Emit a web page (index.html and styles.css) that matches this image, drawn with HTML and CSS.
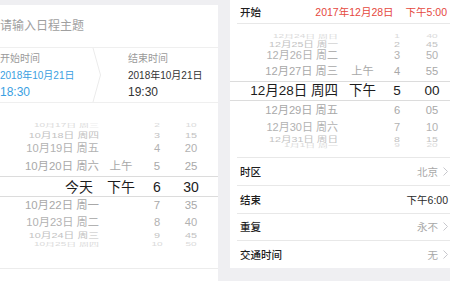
FILE: index.html
```html
<!DOCTYPE html>
<html lang="zh-CN">
<head>
    <meta charset="UTF-8">
    <meta name="viewport" content="width=device-width, initial-scale=1.0">
    <title>日程</title>
    <link rel="stylesheet" href="styles.css">
</head>
<body>
    <div class="screen">
        <section class="panel left">
            <div class="subject">请输入日程主题</div>

            <div class="times">
                <div class="time-col start">
                    <div class="time-label">开始时间</div>
                    <div class="time-date">2018年10月21日</div>
                    <div class="time-hm">18:30</div>
                </div>
                <svg class="time-arrow" width="10" height="54" viewBox="0 0 10 54">
                    <path d="M1 0 L8.5 27 L1 54" fill="none" stroke="#ebebeb" stroke-width="1"/>
                </svg>
                <div class="time-col end">
                    <div class="time-label">结束时间</div>
                    <div class="time-date">2018年10月21日</div>
                    <div class="time-hm">19:30</div>
                </div>
            </div>

            <div class="picker picker-left">
                <div class="row far4"><span class="c-date">10月17日 周三</span><span></span><span>2</span><span>10</span></div>
                <div class="row far3"><span class="c-date">10月18日 周四</span><span></span><span>3</span><span>15</span></div>
                <div class="row far2"><span class="c-date">10月19日 周五</span><span></span><span>4</span><span>20</span></div>
                <div class="row far1"><span class="c-date">10月20日 周六</span><span>上午</span><span>5</span><span>25</span></div>
                <div class="row sel"><span class="c-date today">今天</span><span>下午</span><span>6</span><span>30</span></div>
                <div class="row near1"><span class="c-date">10月22日 周一</span><span></span><span>7</span><span>35</span></div>
                <div class="row near2"><span class="c-date">10月23日 周二</span><span></span><span>8</span><span>40</span></div>
                <div class="row near3"><span class="c-date">10月24日 周三</span><span></span><span>9</span><span>45</span></div>
                <div class="row near4"><span class="c-date">10月25日 周四</span><span></span><span>10</span><span>50</span></div>
            </div>
        </section>

        <section class="panel right">
            <div class="start-row">
                <span class="label">开始</span>
                <span class="start-value">
                    <span>2017年12月28日</span>
                    <span>下午5:00</span>
                </span>
            </div>

            <div class="picker picker-right">
                <div class="row far4"><span class="c-date">12月24日 周日</span><span></span><span>1</span><span>40</span></div>
                <div class="row far3"><span class="c-date">12月25日 周一</span><span></span><span>2</span><span>45</span></div>
                <div class="row far2"><span class="c-date">12月26日 周二</span><span></span><span>3</span><span>50</span></div>
                <div class="row far1"><span class="c-date">12月27日 周三</span><span>上午</span><span>4</span><span>55</span></div>
                <div class="row sel"><span class="c-date">12月28日 周四</span><span>下午</span><span>5</span><span>00</span></div>
                <div class="row near1"><span class="c-date">12月29日 周五</span><span></span><span>6</span><span>05</span></div>
                <div class="row near2"><span class="c-date">12月30日 周六</span><span></span><span>7</span><span>10</span></div>
                <div class="row near3"><span class="c-date">12月31日 周日</span><span></span><span>8</span><span>15</span></div>
                <div class="row near4"><span class="c-date">1月1日 周一</span><span></span><span>9</span><span>20</span></div>
            </div>

            <ul class="list">
                <li class="list-item">
                    <span class="label">时区</span>
                    <span class="value muted">北京<svg class="chev" width="5" height="9" viewBox="0 0 5 9"><path d="M0.5 0.5 L4.5 4.5 L0.5 8.5" fill="none" stroke="#c7c7cc" stroke-width="1"/></svg></span>
                </li>
                <li class="list-item">
                    <span class="label">结束</span>
                    <span class="value">下午6:00</span>
                </li>
                <li class="list-item">
                    <span class="label">重复</span>
                    <span class="value muted">永不<svg class="chev" width="5" height="9" viewBox="0 0 5 9"><path d="M0.5 0.5 L4.5 4.5 L0.5 8.5" fill="none" stroke="#c7c7cc" stroke-width="1"/></svg></span>
                </li>
                <li class="list-item">
                    <span class="label">交通时间</span>
                    <span class="value muted">无<svg class="chev" width="5" height="9" viewBox="0 0 5 9"><path d="M0.5 0.5 L4.5 4.5 L0.5 8.5" fill="none" stroke="#c7c7cc" stroke-width="1"/></svg></span>
                </li>
            </ul>
        </section>
    </div>
</body>
</html>
```

FILE: styles.css
```css
* {
    margin: 0;
    padding: 0;
    box-sizing: border-box;
    font-family: "Liberation Sans", "Noto Sans CJK SC", sans-serif;
}

body {
    background-color: #efeff2;
    width: 450px;
    height: 281px;
    overflow: hidden;
}

.screen {
    display: flex;
    gap: 12px;
    height: 281px;
}

.panel {
    background-color: white;
}

/* left screenshot */
.panel.left {
    width: 218px;
    margin-top: 5px;
    height: 276px;
}

.subject {
    height: 43px;
    line-height: 42px;
    font-size: 12px;
    color: #a0a0a0;
    border-bottom: 1px solid #efefef;
}

.times {
    display: flex;
    height: 55px;
    border-bottom: 1px solid #efefef;
}

.time-col {
    padding-top: 3px;
}

.time-col.start {
    width: 92px;
    color: #3a9fe2;
}

.time-col.end {
    margin-left: 26px;
    color: #333;
}

.time-label {
    font-size: 10px;
    line-height: 16px;
    color: #9a9a9a;
}

.time-date {
    font-size: 10px;
    line-height: 17px;
}

.time-hm {
    font-size: 12px;
    line-height: 17px;
}

/* wheel pickers */
.picker {
    display: flex;
    flex-direction: column;
}

.picker-left {
    height: 166px;
    padding-top: 18px;
    border-bottom: 1px solid #ececec;
}

.picker-right {
    height: 133px;
    padding-top: 9px;
}

.row {
    display: grid;
    align-items: center;
    text-align: center;
    line-height: 1;
    white-space: nowrap;
}

.picker-left .row {
    grid-template-columns: 104px 34px 38px 30px;
}

.picker-right .row {
    grid-template-columns: 115px 35px 34px 36px;
}

.c-date {
    text-align: right;
}

.picker-left .c-date {
    padding-right: 5px;
}

.picker-right .c-date {
    padding-right: 7px;
}

.picker-left .c-date.today {
    padding-right: 11px;
}

.row.sel {
    color: #1c1c1c;
    border-top: 1px solid #dcdcdc;
    border-bottom: 1px solid #dcdcdc;
}

.picker-left .sel { height: 21px; font-size: 14px; }
.picker-left .far1 { height: 19px; font-size: 11.4px; }
.picker-left .far2 { height: 16px; font-size: 11.2px; }
.picker-left .far3 { height: 12px; font-size: 10.8px; }
.picker-left .far4 { height: 8px; font-size: 10px; }
.picker-left .near1 { height: 18px; font-size: 11.4px; }
.picker-left .near2 { height: 15px; font-size: 11.2px; }
.picker-left .near3 { height: 10px; font-size: 10.8px; }
.picker-left .near4 { height: 8px; font-size: 10px; }

.picker-right .sel { height: 20px; font-size: 13.5px; }
.picker-right .far1 { height: 18px; font-size: 11.2px; }
.picker-right .far2 { height: 15px; font-size: 11px; }
.picker-right .far3 { height: 9px; font-size: 10.6px; }
.picker-right .far4 { height: 6px; font-size: 10px; }
.picker-right .near1 { height: 19px; font-size: 11.2px; }
.picker-right .near2 { height: 14px; font-size: 11px; }
.picker-right .near3 { height: 8px; font-size: 10.6px; }
.picker-right .near4 { height: 6px; font-size: 10px; }

.far1, .near1 { color: #a8a8a8; }
.far2, .near2 { color: #b2b2b2; }
.far3, .near3 { color: #c2c2c2; transform: scaleY(0.72); }
.far4, .near4 { color: #dadada; transform: scaleY(0.45); }

/* right screenshot */
.panel.right {
    width: 220px;
    height: 268px;
}

.start-row {
    display: flex;
    justify-content: space-between;
    align-items: center;
    height: 24px;
    margin-left: 7px;
    padding: 0 3px;
    border-bottom: 1px solid #e8e8e8;
    font-size: 10.5px;
}

.start-value {
    display: flex;
    gap: 12px;
    color: #e5483d;
}

.label {
    font-size: 10.5px;
    font-weight: 500;
    color: #1e1e1e;
}

.list {
    list-style: none;
}

.list-item {
    display: flex;
    justify-content: space-between;
    align-items: center;
    height: 27.75px;
    margin-left: 7px;
    padding: 0 2px 0 3px;
    border-top: 1px solid #e8e8e8;
}

.value {
    display: flex;
    align-items: center;
    gap: 5px;
    font-size: 10.5px;
    color: #2a2a2a;
}

.value.muted {
    color: #a8a8a8;
}
```
